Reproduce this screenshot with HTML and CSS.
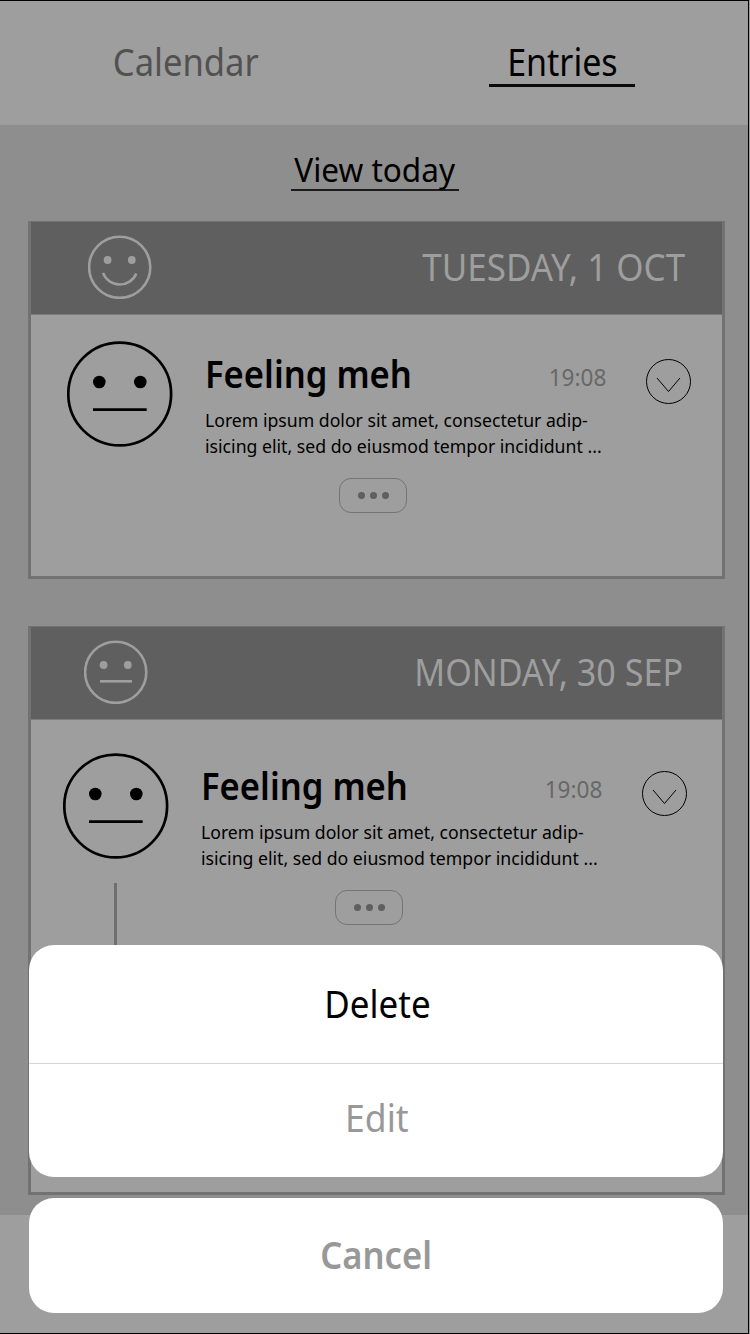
FILE: index.html
```html
<!DOCTYPE html>
<html lang="en">
<head>
<meta charset="utf-8">
<title>Entries</title>
<link rel="stylesheet" href="styles.css">
</head>
<body>
<div class="screen">
  <svg class="defs" aria-hidden="true">
    <symbol id="meh" viewBox="0 0 106 106">
      <circle cx="52.7" cy="53" r="51.4" fill="none" stroke="currentColor" stroke-width="2.7"/>
      <circle cx="32.3" cy="41" r="6.3" fill="currentColor"/>
      <circle cx="73.3" cy="41" r="6.3" fill="currentColor"/>
      <path d="M26 68.7H79.700" stroke="currentColor" stroke-width="2.7"/>
    </symbol>
    <symbol id="expand" viewBox="0 0 46 46">
      <circle cx="22.5" cy="22.5" r="22" fill="none" stroke="currentColor"/>
      <path d="M11 19L22.500 32.500L34 19" fill="none" stroke="currentColor"/>
    </symbol>
  </svg>

  <nav class="tabs">
    <a class="tab tab-calendar"><span class="fit">Calendar</span></a>
    <a class="tab tab-entries"><span class="fit">Entries</span></a>
  </nav>

  <main class="feed">
    <a class="today"><span class="fit">View today</span></a>

    <section class="card">
      <header class="card-head">
        <svg class="mood-small" viewBox="0 0 64 64">
          <circle cx="31.7" cy="32.3" r="30.6" fill="none" stroke="currentColor" stroke-width="2.6"/>
          <circle cx="19.6" cy="25" r="3.9" fill="currentColor"/>
          <circle cx="43.8" cy="25" r="3.9" fill="currentColor"/>
          <path d="M15 37.900A17.900 17.900 0 0 0 48.300 38.500" fill="none" stroke="currentColor" stroke-width="2.6"/>
        </svg>
        <h2 class="date date-tue"><span class="fit">TUESDAY, 1 OCT</span></h2>
      </header>
      <article class="entry">
        <svg class="mood"><use href="#meh"/></svg>
        <div class="entry-body">
          <div class="entry-top">
            <h3 class="title"><span class="fit">Feeling meh</span></h3>
            <time class="time"><span class="fit">19:08</span></time>
          </div>
          <p class="text"><span class="fit line-one">Lorem ipsum dolor sit amet, consectetur adip-</span><br><span class="fit line-two">isicing elit, sed do eiusmod tempor incididunt ...</span></p>
          <span class="more"><i></i><i></i><i></i></span>
        </div>
        <svg class="expand"><use href="#expand"/></svg>
      </article>
    </section>

    <section class="card card-tall">
      <header class="card-head">
        <svg class="mood-small" viewBox="0 0 64 64">
          <circle cx="31.7" cy="32.3" r="30.6" fill="none" stroke="currentColor" stroke-width="2.6"/>
          <circle cx="19.6" cy="25" r="3.9" fill="currentColor"/>
          <circle cx="43.8" cy="25" r="3.9" fill="currentColor"/>
          <path d="M16 41.300H48" stroke="currentColor" stroke-width="2.6"/>
        </svg>
        <h2 class="date date-mon"><span class="fit">MONDAY, 30 SEP</span></h2>
      </header>
      <article class="entry">
        <div class="mood-column">
          <svg class="mood"><use href="#meh"/></svg>
          <div class="thread"></div>
        </div>
        <div class="entry-body">
          <div class="entry-top">
            <h3 class="title"><span class="fit">Feeling meh</span></h3>
            <time class="time"><span class="fit">19:08</span></time>
          </div>
          <p class="text"><span class="fit line-one">Lorem ipsum dolor sit amet, consectetur adip-</span><br><span class="fit line-two">isicing elit, sed do eiusmod tempor incididunt ...</span></p>
          <span class="more"><i></i><i></i><i></i></span>
        </div>
        <svg class="expand"><use href="#expand"/></svg>
      </article>
    </section>
  </main>

  <div class="sheet">
    <div class="sheet-group">
      <button class="action delete"><span class="fit">Delete</span></button>
      <button class="action edit"><span class="fit">Edit</span></button>
    </div>
    <div class="sheet-group">
      <button class="action cancel"><span class="fit">Cancel</span></button>
    </div>
  </div>
</div>
</body>
</html>
```
FILE: styles.css
```css
* { box-sizing: border-box; }

body {
  margin: 0;
  background: #9e9e9e;
  font-family: "Noto Sans", "Open Sans", sans-serif;
  color: #000;
}

h2, h3, p { margin: 0; font-weight: 400; }

svg { display: block; flex: none; }

.defs { position: absolute; width: 0; height: 0; }

.screen {
  position: relative;
  width: 749px;
  height: 1334px;
  overflow: hidden;
  border: solid #000;
  border-width: 1px 1px 1px 0;
}

/* Text condensed horizontally to the width of its slot */
.fit {
  display: inline-block;
  white-space: nowrap;
  transform: scaleX(var(--sx, 1));
}

.tabs {
  display: grid;
  grid-template-columns: 371px 1fr;
  justify-items: center;
  height: 124px;
  padding-top: 33px;
  font-size: 37.8px;
}

.tab { height: 53px; line-height: 55px; }
.tab-calendar { color: #515151; --sx: .915; }
.tab-entries {
  width: 146px;
  margin-left: 5px;
  display: flex;
  justify-content: center;
  border-bottom: 3px solid #0a0a0a;
  --sx: .9;
}

.feed {
  display: flex;
  flex-direction: column;
  height: 1090px;
  padding-left: 28px;
  background: #8e8e8e;
}

.today {
  display: flex;
  justify-content: center;
  width: 168px;
  height: 41px;
  margin: 25px 0 30px 263px;
  border-bottom: 2px solid #1b1b1b;
  font-size: 33.6px;
  line-height: 39px;
  --sx: .938;
}

.card {
  width: 697px;
  height: 358px;
  margin-bottom: 47px;
  border: 3px solid #727272;
  border-top-width: 1px;
  background: #9e9e9e;
  flex: none;
}
.card-tall { height: 569px; margin-bottom: 0; }

.card-head {
  display: flex;
  justify-content: space-between;
  height: 93px;
  padding: 13px 37px 0 57px;
  border-bottom: 1px solid #7b7b7b;
  background: #5f5f5f;
  color: #9e9e9e;
}

.mood-small { width: 64px; height: 64px; }

.date { font-size: 37.8px; line-height: 64px; }
.date .fit { transform-origin: right; }
.date-tue { --sx: .925; }
.date-mon { --sx: .902; }

.entry { display: flex; padding: 26px 0 0 36px; }
.mood { width: 106px; height: 106px; }

.entry-body {
  display: flex;
  flex-direction: column;
  width: 403px;
  margin-left: 32px;
}
.entry-top { display: flex; justify-content: space-between; height: 66px; }

.title { font-size: 37px; font-weight: 600; line-height: 65px; --sx: .935; }
.title .fit, .text .fit { transform-origin: left; }
.time { padding-right: 2px; font-size: 24px; line-height: 72px; color: #686868; --sx: .94; }
.time .fit { transform-origin: right; }

.text { height: 71px; font-size: 18.8px; line-height: 26px; }
.line-one { --sx: .94; }
.line-two { --sx: .941; }

.more {
  display: flex;
  align-items: center;
  justify-content: center;
  gap: 5px;
  width: 68px;
  height: 35px;
  margin-left: 134px;
  border: 1px solid #747474;
  border-radius: 12px;
}
.more i { width: 7px; height: 7px; border-radius: 50%; background: #5f5f5f; }

.expand { width: 46px; height: 46px; margin: 18px 0 0 38px; }

.card-tall .card-head { padding-left: 53px; padding-right: 39px; }
.card-tall .entry { padding: 33px 0 0 32px; }
.mood-column { width: 106px; }
.thread { width: 3px; height: 200px; margin: 24px 0 0 51px; background: #6f6f6f; }

.sheet {
  position: absolute;
  left: 29px;
  top: 944px;
  width: 694px;
  display: flex;
  flex-direction: column;
  gap: 21px;
}
.sheet-group {
  display: flex;
  flex-direction: column;
  border-radius: 25px;
  overflow: hidden;
  background: #fff;
}
.action {
  height: 115px;
  padding: 0 0 2px;
  border: 0;
  background: none;
  font: 400 37.8px/60px "Noto Sans", "Open Sans", sans-serif;
  color: #989898;
  --sx: .925;
}
.delete { height: 119px; padding: 0 0 0 2px; color: #000; border-bottom: 1px solid #d6d6d6; }
.edit { height: 113px; padding: 0 0 6px 2px; --sx: .94; }
.cancel { font-weight: 600; --sx: .915; }
```
